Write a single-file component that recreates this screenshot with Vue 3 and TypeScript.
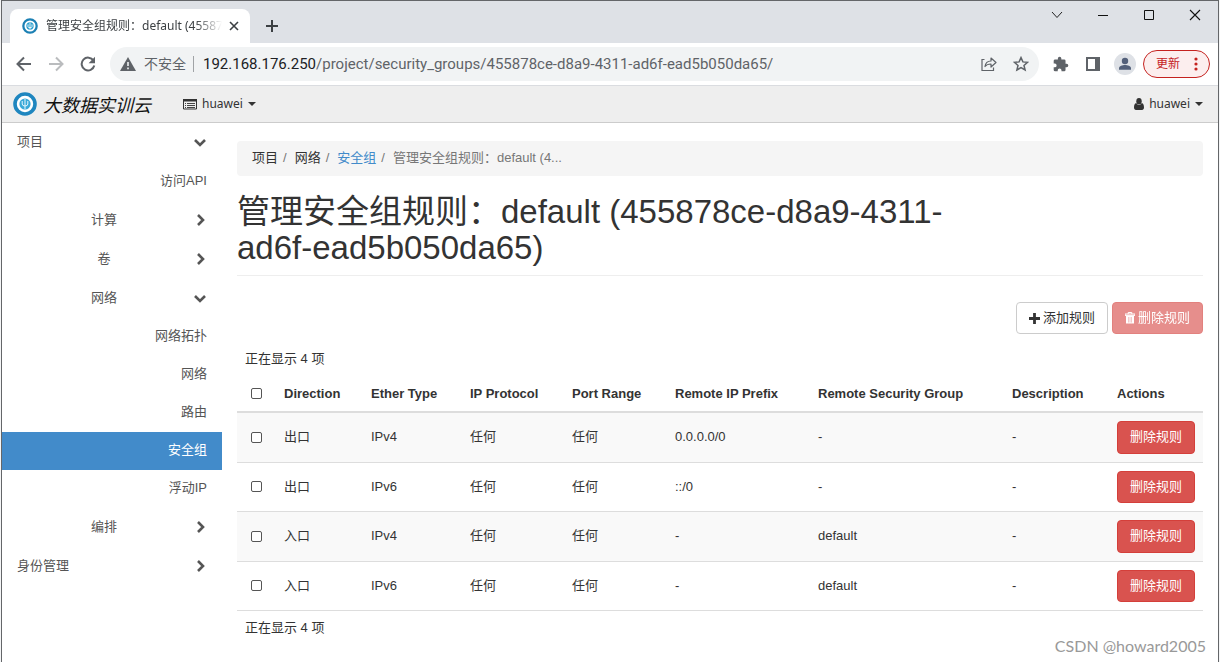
<script setup lang="ts">
import { reactive, ref } from 'vue'

interface NavRow {
  label: string
  kind: 'root' | 'group' | 'entry' | 'item'
  open?: boolean
  active?: boolean
}

interface Rule {
  direction: string
  etherType: string
  protocol: string
  ports: string
  prefix: string
  group: string
  description: string
}

const navRows: NavRow[] = [
  { label: '项目', kind: 'root', open: true },
  { label: '访问API', kind: 'entry' },
  { label: '计算', kind: 'group' },
  { label: '卷', kind: 'group' },
  { label: '网络', kind: 'group', open: true },
  { label: '网络拓扑', kind: 'item' },
  { label: '网络', kind: 'item' },
  { label: '路由', kind: 'item' },
  { label: '安全组', kind: 'item', active: true },
  { label: '浮动IP', kind: 'item' },
  { label: '编排', kind: 'group' },
  { label: '身份管理', kind: 'root' },
]

const columns = [
  'Direction',
  'Ether Type',
  'IP Protocol',
  'Port Range',
  'Remote IP Prefix',
  'Remote Security Group',
  'Description',
  'Actions',
]

const rules: Rule[] = [
  { direction: '出口', etherType: 'IPv4', protocol: '任何', ports: '任何', prefix: '0.0.0.0/0', group: '-', description: '-' },
  { direction: '出口', etherType: 'IPv6', protocol: '任何', ports: '任何', prefix: '::/0', group: '-', description: '-' },
  { direction: '入口', etherType: 'IPv4', protocol: '任何', ports: '任何', prefix: '-', group: 'default', description: '-' },
  { direction: '入口', etherType: 'IPv6', protocol: '任何', ports: '任何', prefix: '-', group: 'default', description: '-' },
]

const selected = reactive(rules.map(() => false))
const allSelected = ref(false)

function toggleAll() {
  selected.forEach((_, i) => (selected[i] = allSelected.value))
}
</script>

<template>
  <div class="window">
    <header class="tabstrip">
      <div class="tab">
        <svg class="favicon" viewBox="0 0 24 24" aria-hidden="true">
          <circle cx="12" cy="12" r="10" fill="#fff" stroke="#1c80b4" stroke-width="3.4" />
          <circle cx="12" cy="12" r="5.500" fill="#2a9fce" />
          <path d="M12 7v10M9 9.500v3.500q0 1.500 3 1.500t3-1.500V9.500" fill="none" stroke="#fff" stroke-width="1.300" />
        </svg>
        <span class="tab-title">管理安全组规则：default (455878ce-d8a9-4311</span>
        <button class="icon-btn tab-close" aria-label="关闭标签页">
          <svg width="10" height="10" viewBox="0 0 10 10"><path d="M1 1l8 8M9 1l-8 8" stroke="#3c4043" stroke-width="1.600" /></svg>
        </button>
      </div>
      <button class="icon-btn new-tab" aria-label="新标签页">
        <svg width="14" height="14" viewBox="0 0 14 14"><path d="M7 1v12M1 7h12" stroke="#3c4043" stroke-width="2" /></svg>
      </button>
      <div class="window-controls">
        <button class="icon-btn" aria-label="搜索标签页">
          <svg width="12" height="12" viewBox="0 0 12 12"><path d="M1 3l5 5.500L11 3" fill="none" stroke="#222" /></svg>
        </button>
        <button class="icon-btn" aria-label="最小化">
          <svg width="12" height="12" viewBox="0 0 12 12"><path d="M1 6.500h10" stroke="#111" /></svg>
        </button>
        <button class="icon-btn" aria-label="最大化">
          <svg width="12" height="12" viewBox="0 0 12 12"><path d="M1.500 1.500h9v9h-9z" fill="none" stroke="#111" /></svg>
        </button>
        <button class="icon-btn" aria-label="关闭">
          <svg width="12" height="12" viewBox="0 0 12 12"><path d="M1 1l10 10M11 1L1 11" stroke="#111" stroke-width="1.100" /></svg>
        </button>
      </div>
    </header>

    <div class="toolbar">
      <button class="icon-btn nav-btn" aria-label="后退">
        <svg width="16" height="16" viewBox="0 0 16 16"><path d="M15 8H2M8 1.500L1.500 8 8 14.500" fill="none" stroke="#5f6368" stroke-width="2" /></svg>
      </button>
      <button class="icon-btn nav-btn" aria-label="前进">
        <svg width="16" height="16" viewBox="0 0 16 16"><path d="M1 8h13M8 1.500L14.500 8 8 14.500" fill="none" stroke="#babcbe" stroke-width="2" /></svg>
      </button>
      <button class="icon-btn nav-btn" aria-label="重新加载">
        <svg width="16" height="16" viewBox="0 0 16 16">
          <path d="M13.500 4.600A6.400 6.400 0 1 0 14.300 9.500" fill="none" stroke="#5f6368" stroke-width="2" />
          <path d="M15 .8v6.400H8.600z" fill="#5f6368" />
        </svg>
      </button>
      <div class="omnibox">
        <svg width="16" height="14" viewBox="0 0 16 14" aria-hidden="true">
          <path d="M8 0l8 14H0z" fill="#5f6368" />
          <path d="M8 5v4M8 10.500v1.700" stroke="#f1f3f4" stroke-width="1.600" />
        </svg>
        <span class="insecure">不安全</span>
        <span class="url"><b>192.168.176.250</b>/project/security_groups/455878ce-d8a9-4311-ad6f-ead5b050da65/</span>
        <button class="icon-btn" aria-label="分享">
          <svg width="16" height="16" viewBox="0 0 16 16">
            <path d="M3.500 3.500H1v11h11.500v-3" fill="none" stroke="#5f6368" stroke-width="1.200" />
            <path d="M4 10.500c.5-4 3-5.500 6-5.500V2l5 4.500-5 4.500V8c-2.500 0-4.500.5-6 2.500z" fill="none" stroke="#5f6368" stroke-width="1.200" stroke-linejoin="round" />
          </svg>
        </button>
        <button class="icon-btn" aria-label="收藏">
          <svg width="16" height="16" viewBox="0 0 16 16">
            <path d="M8 1.600l1.900 4.300 4.600.4-3.500 3.100 1.100 4.600L8 11.600 3.900 14 5 9.400 1.500 6.300l4.600-.4z" fill="none" stroke="#5f6368" stroke-width="1.500" />
          </svg>
        </button>
      </div>
      <button class="icon-btn" aria-label="扩展程序">
        <svg width="16" height="16" viewBox="1 0 23 23">
          <path d="M20.500 11H19V7a2 2 0 0 0-2-2h-4V3.500a2.500 2.500 0 0 0-5 0V5H4a2 2 0 0 0-2 2v3.800h1.500a2.700 2.700 0 0 1 0 5.400H2V20a2 2 0 0 0 2 2h3.800v-1.500a2.700 2.700 0 0 1 5.400 0V22H17a2 2 0 0 0 2-2v-4h1.500a2.500 2.500 0 0 0 0-5z" fill="#5f6368" />
        </svg>
      </button>
      <button class="icon-btn" aria-label="侧边栏">
        <svg width="14" height="14" viewBox="0 0 14 14">
          <path d="M1 1h12v12H1z" fill="none" stroke="#5f6368" stroke-width="2" />
          <path d="M9 1h4v12H9z" fill="#5f6368" />
        </svg>
      </button>
      <button class="icon-btn avatar" aria-label="个人资料">
        <svg width="22" height="22" viewBox="0 0 22 22">
          <circle cx="11" cy="11" r="11" fill="#dee1e6" />
          <circle cx="11" cy="8" r="3.200" fill="#53607a" />
          <path d="M5 16.800v-1.600c0-2.200 3.500-3.200 6-3.200s6 1 6 3.200v1.600z" fill="#53607a" />
        </svg>
      </button>
      <button class="update">
        更新
        <svg width="4" height="14" viewBox="0 0 4 14" aria-hidden="true">
          <circle cx="2" cy="2" r="1.600" fill="#c5221f" /><circle cx="2" cy="7" r="1.600" fill="#c5221f" /><circle cx="2" cy="12" r="1.600" fill="#c5221f" />
        </svg>
      </button>
    </div>

    <nav class="navbar" aria-label="顶部导航">
      <a class="brand" href="#">
        <svg width="24" height="24" viewBox="0 0 24 24" aria-hidden="true">
          <circle cx="12" cy="12" r="10" fill="#fff" stroke="#1f86bf" stroke-width="3.600" />
          <circle cx="12" cy="12" r="5.600" fill="#3aa9d8" />
          <path d="M12 7v10M9.200 9v3q0 2 2.800 2t2.800-2V9" fill="none" stroke="#e8f6fc" stroke-width="1" />
        </svg>
        <span class="brand-name">大数据实训云</span>
      </a>
      <button class="menu-btn project-menu">
        <svg width="14" height="12" viewBox="0 0 14 12" aria-hidden="true">
          <path d="M.5 1.500h13v9.500H.5z" fill="none" stroke="#333" />
          <path d="M0 1h14v2.500H0z" fill="#333" />
          <path d="M2 5.500h1M4 5.500h8M2 7.500h1M4 7.500h8M2 9.500h1M4 9.500h8" stroke="#444" />
        </svg>
        huawei
        <svg width="8" height="4" viewBox="0 0 8 4" aria-hidden="true"><path d="M0 0h8L4 4z" fill="#333" /></svg>
      </button>
      <button class="menu-btn user-menu">
        <svg width="10" height="12" viewBox="0 0 10 12" aria-hidden="true">
          <ellipse cx="5" cy="3.200" rx="2.700" ry="3.200" fill="#333" />
          <path d="M2.200 5C.7 5.400 0 7 0 9.500 0 11 .8 12 2 12h6c1.200 0 2-1 2-2.500C10 7 9.300 5.400 7.800 5 7 6.300 6 7 5 7S3 6.300 2.200 5z" fill="#333" />
        </svg>
        huawei
        <svg width="8" height="4" viewBox="0 0 8 4" aria-hidden="true"><path d="M0 0h8L4 4z" fill="#333" /></svg>
      </button>
    </nav>

    <div class="body">
      <nav class="sidebar" aria-label="侧边导航">
        <a
          v-for="(row, i) in navRows"
          :key="i"
          href="#"
          class="side-row"
          :class="[row.kind, { active: row.active }]"
        >
          <span class="side-label">{{ row.label }}</span>
          <svg v-if="row.kind === 'root' || row.kind === 'group'" class="chevron" width="14" height="14" viewBox="0 0 14 14" aria-hidden="true">
            <path v-if="row.open" d="M2 5l5 5 5-5" />
            <path v-else d="M5 2l5 5-5 5" />
          </svg>
        </a>
      </nav>

      <main class="main">
        <ol class="breadcrumb">
          <li>项目</li>
          <li>网络</li>
          <li><a href="#">安全组</a></li>
          <li class="current">管理安全组规则：default (4...</li>
        </ol>

        <div class="page-header">
          <h1>管理安全组规则：default (455878ce-d8a9-4311-ad6f-ead5b050da65)</h1>
        </div>

        <div class="actions">
          <button class="btn">
            <svg width="11" height="11" viewBox="0 0 11 11" aria-hidden="true"><path d="M5.500 0v11M0 5.500h11" stroke="#333" stroke-width="2.800" /></svg>
            添加规则
          </button>
          <button class="btn danger" disabled>
            <svg width="10" height="12" viewBox="0 0 10 12" aria-hidden="true">
              <path d="M0 2h10v1.400H0zM3.200 2V.5h3.600V2" fill="none" stroke="#fff" />
              <path d="M1 4h8v7.500H1z" fill="#fff" />
              <path d="M3.500 5v5.500M5 5v5.500M6.500 5v5.500" stroke="#e58d8b" stroke-width=".7" />
            </svg>
            删除规则
          </button>
        </div>

        <table class="rules">
          <colgroup>
            <col class="c-check" />
            <col class="c-direction" />
            <col class="c-ether" />
            <col class="c-protocol" />
            <col class="c-ports" />
            <col class="c-prefix" />
            <col class="c-group" />
            <col class="c-description" />
            <col class="c-actions" />
          </colgroup>
          <thead>
            <tr class="count"><td colspan="9">正在显示 4 项</td></tr>
            <tr class="heads">
              <th class="check"><input v-model="allSelected" type="checkbox" aria-label="全选" @change="toggleAll" /></th>
              <th v-for="name in columns" :key="name" scope="col">{{ name }}</th>
            </tr>
          </thead>
          <tbody>
            <tr v-for="(rule, i) in rules" :key="i">
              <td class="check"><input v-model="selected[i]" type="checkbox" :aria-label="`选择规则 ${i + 1}`" /></td>
              <td>{{ rule.direction }}</td>
              <td>{{ rule.etherType }}</td>
              <td>{{ rule.protocol }}</td>
              <td>{{ rule.ports }}</td>
              <td>{{ rule.prefix }}</td>
              <td>{{ rule.group }}</td>
              <td>{{ rule.description }}</td>
              <td><button class="btn danger">删除规则</button></td>
            </tr>
          </tbody>
          <tfoot>
            <tr class="count"><td colspan="9">正在显示 4 项</td></tr>
          </tfoot>
        </table>
      </main>
    </div>
    <div class="watermark">CSDN @howard2005</div>
  </div>
</template>

<style>
html,
body,
#app {
  height: 100%;
}
body {
  background: #f4f5f6;
}
</style>

<style scoped>
.window {
  position: relative;
  box-sizing: border-box;
  min-height: 100%;
  margin: 0 1px;
  border: 1px solid #646669;
  border-bottom: 0;
  background: #fff;
  color: #333;
  font: 13px/18px "Liberation Sans", "Noto Sans CJK SC", sans-serif;
}
button {
  margin: 0;
  padding: 0;
  border: 0;
  background: none;
  color: inherit;
  font: inherit;
  white-space: nowrap;
}
svg {
  flex: none;
}
a {
  color: inherit;
  text-decoration: none;
}
.icon-btn {
  display: flex;
  flex: none;
  align-items: center;
  justify-content: center;
}

.tabstrip {
  display: flex;
  height: 42px;
  background: #dee1e6;
}
.tab {
  display: flex;
  align-items: center;
  box-sizing: border-box;
  width: 240px;
  height: 34px;
  margin: 8px 0 0 8px;
  padding: 0 10px 0 12px;
  border-radius: 8px 8px 0 0;
  background: #fff;
}
.favicon {
  width: 16px;
  height: 16px;
  margin-right: 8px;
}
.tab-title {
  flex: 1;
  overflow: hidden;
  color: #3c4043;
  font: 12px/18px "Noto Sans", "Noto Sans CJK SC", sans-serif;
  white-space: nowrap;
  mask-image: linear-gradient(to right, #000 85%, transparent);
}
.tab-close {
  width: 12px;
  margin-left: 6px;
}
.new-tab {
  width: 28px;
  height: 28px;
  margin: 11px 0 0 8px;
}
.window-controls {
  display: flex;
  margin-left: auto;
}
.window-controls .icon-btn {
  width: 46px;
  height: 28px;
}

.toolbar {
  display: flex;
  align-items: center;
  height: 42px;
  padding: 0 8px 0 6px;
  border-bottom: 1px solid #dadce0;
}
.nav-btn {
  width: 32px;
  height: 32px;
}
.omnibox {
  display: flex;
  flex: 1;
  align-items: center;
  gap: 16px;
  height: 34px;
  margin: 0 13px 0 6px;
  padding: 0 10px;
  border-radius: 17px;
  background: #f1f3f4;
  color: #5f6368;
  font: 14px/20px "Noto Sans", "Noto Sans CJK SC", sans-serif;
}
.insecure {
  margin-left: -8px;
  padding-right: 7px;
  border-right: 1px solid #a0a3a6;
  line-height: 16px;
  white-space: nowrap;
}
.url {
  flex: 1;
  margin-left: -7px;
  font: 15px/20px Roboto, sans-serif;
  white-space: nowrap;
}
.url b {
  color: #202124;
  font-weight: 400;
}
.toolbar > .icon-btn:not(.nav-btn) {
  margin-right: 10px;
  min-width: 18px;
}
.toolbar > .icon-btn + .icon-btn:not(.nav-btn) {
  margin-left: 4px;
}
.toolbar > .icon-btn + .avatar.avatar {
  margin: 0 7px 0 2px;
}
.update {
  display: flex;
  align-items: center;
  gap: 14px;
  height: 28px;
  padding: 0 11px 0 12px;
  border: 1px solid #c5221f;
  border-radius: 14px;
  background: #fceeee;
  color: #c5221f;
  font-size: 12px;
}

.navbar {
  display: flex;
  align-items: center;
  height: 36px;
  border-bottom: 1px solid #ccc;
  background: #eee;
  font: 12px/18px "Noto Sans", sans-serif;
}
.brand {
  display: flex;
  align-items: center;
  gap: 6px;
  padding-left: 11px;
}
.brand-name {
  color: #111;
  font: italic 400 18px/24px "Noto Sans CJK SC", sans-serif;
}
.menu-btn {
  display: flex;
  align-items: center;
  gap: 5px;
}
.project-menu {
  margin-left: 32px;
}
.user-menu {
  margin-left: auto;
  padding-right: 15px;
}

.body {
  display: flex;
}
.sidebar {
  flex: none;
  width: 220px;
}
.side-row {
  display: flex;
  align-items: center;
  box-sizing: border-box;
  height: 39px;
  padding: 0 15px 2px;
  color: #555;
}
.side-row.item {
  height: 38px;
}
.side-label {
  flex: 1;
}
.entry .side-label,
.item .side-label {
  text-align: right;
}
.group .side-label {
  text-align: center;
}
.side-row.active {
  background: #428bca;
  color: #fff;
}
.chevron {
  margin-left: 2px;
  fill: none;
  stroke: #555;
  stroke-width: 2.600;
}

.main {
  flex: 1;
  min-width: 0;
  padding: 18px 15px;
}
.breadcrumb {
  display: flex;
  margin: 0;
  padding: 8px 15px 9px;
  border-radius: 4px;
  background: #f5f5f5;
  list-style: none;
}
.breadcrumb li + li::before {
  padding: 0 8px 0 5px;
  color: #777;
  content: "/";
}
.breadcrumb a {
  color: #428bca;
}
.breadcrumb .current {
  color: #777;
}
.page-header {
  padding: 18px 0 9px;
  border-bottom: 1px solid #eee;
}
h1 {
  width: 75%;
  margin: 0;
  font-weight: 400;
  font-size: 33px;
  line-height: 36px;
}
.actions {
  display: flex;
  justify-content: flex-end;
  gap: 4px;
  margin: 26px 0 14px;
}
.btn {
  display: flex;
  align-items: center;
  gap: 3px;
  box-sizing: border-box;
  height: 32px;
  padding: 0 12px;
  border: 1px solid #ccc;
  border-radius: 4px;
  background: #fff;
}
.btn.danger {
  border-color: #d43f3a;
  background: #d9534f;
  color: #fff;
}
.btn:disabled {
  opacity: 0.65;
}

.rules {
  width: 100%;
  border-collapse: separate;
  border-spacing: 0;
  table-layout: fixed;
}
.c-check { width: 39px; }
.c-direction { width: 87px; }
.c-ether { width: 99px; }
.c-protocol { width: 102px; }
.c-ports { width: 103px; }
.c-prefix { width: 143px; }
.c-group { width: 194px; }
.c-description { width: 105px; }
.c-actions { width: 94px; }
th,
td {
  box-sizing: border-box;
  padding: 0 8px;
  text-align: left;
}
.count td {
  height: 33px;
}
thead .count td {
  height: 28px;
  padding-bottom: 6px;
}
.heads th {
  height: 37px;
  border-bottom: 2px solid #ddd;
}
tbody td {
  height: 49px;
  padding-bottom: 1px;
  border-bottom: 1px solid #ddd;
}
tbody tr:nth-child(odd) td {
  height: 50px;
  background: #f9f9f9;
}
tbody tr:nth-child(odd) .btn {
  height: 33px;
}
th.check,
td.check {
  padding-left: 14px;
}
.check input {
  display: block;
  box-sizing: border-box;
  width: 11px;
  height: 11px;
  margin: 0;
  border: 1px solid #555;
  border-radius: 2px;
  appearance: none;
  background: #fff;
}
.check input:checked {
  background: #428bca;
}
.watermark {
  position: absolute;
  right: 12px;
  bottom: 7px;
  color: #999;
  font: 16px/18px Lato, sans-serif;
}
</style>
